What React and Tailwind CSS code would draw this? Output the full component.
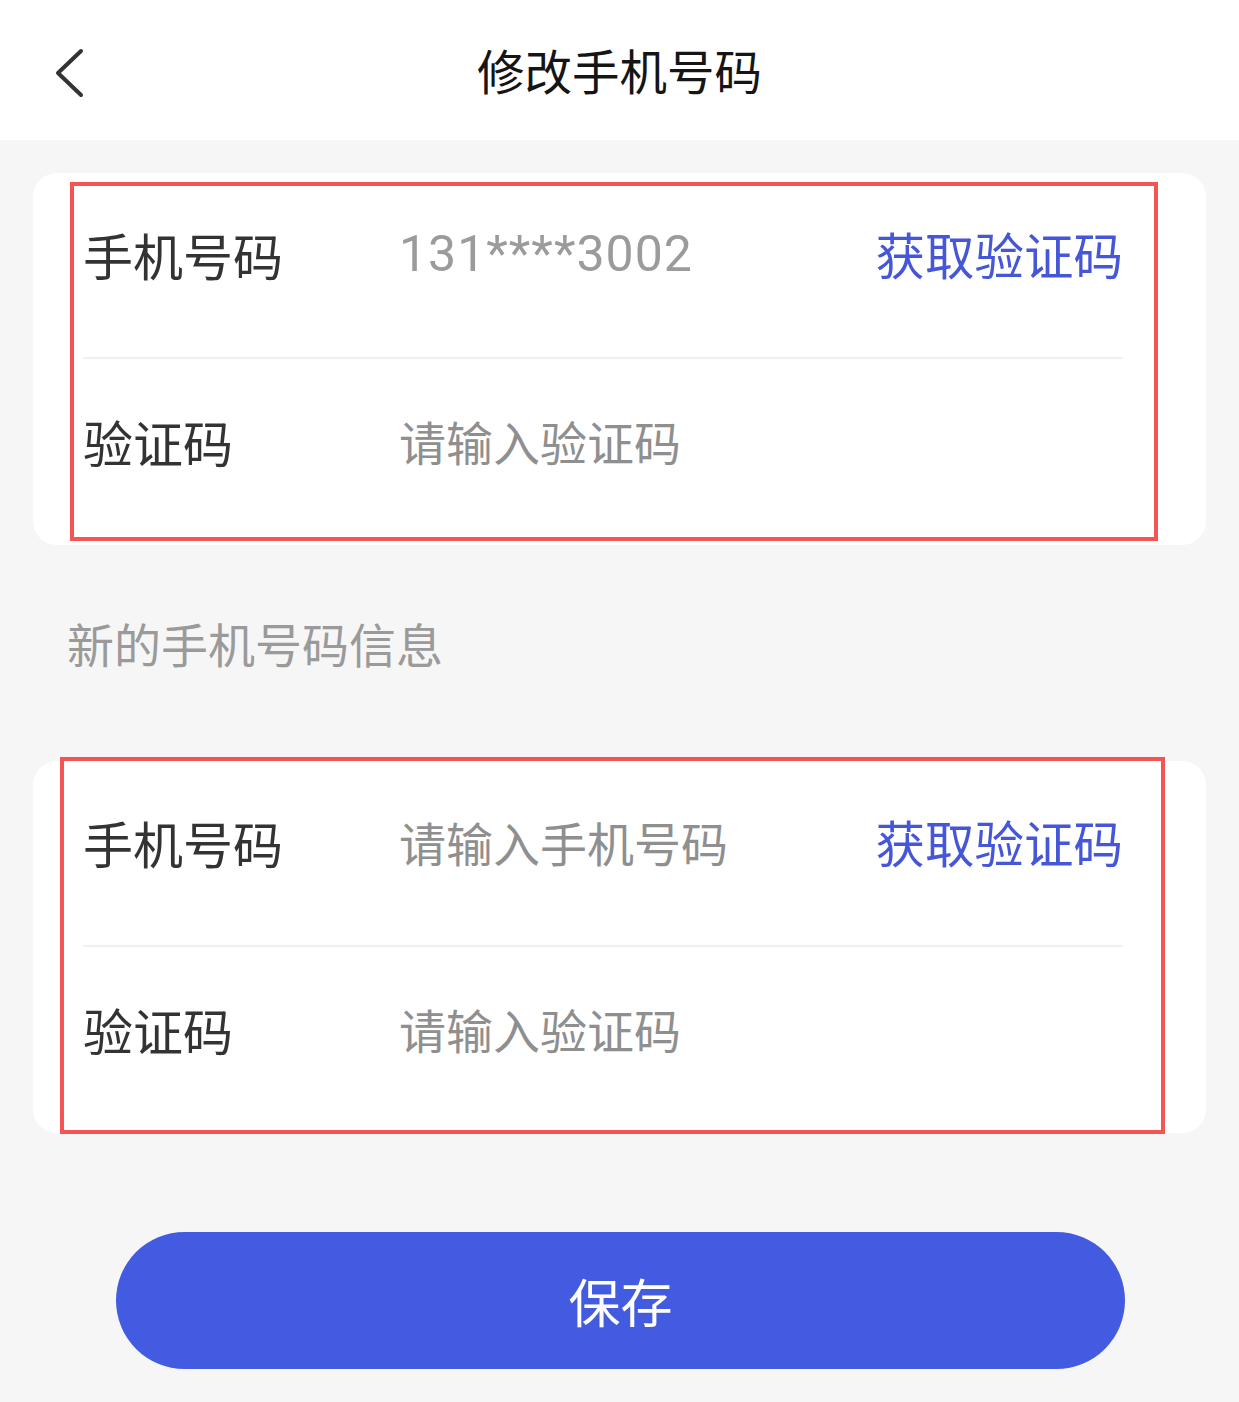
const CJK = "font-['Noto_Sans_CJK_SC','Noto_Sans',sans-serif]";

function BackIcon() {
  return (
    <svg width="32" height="50" viewBox="0 0 32 50" fill="none">
      <path
        d="M27 3 L4 25 L27 47"
        stroke="#333333"
        strokeWidth="4"
        strokeLinecap="round"
        strokeLinejoin="round"
      />
    </svg>
  );
}

function Row({ label, value, placeholder, action, divider }) {
  return (
    <div
      className={`flex h-[186px] items-center pb-[22px] ${
        divider ? "border-b-2 border-[#f0f0f0]" : ""
      }`}
    >
      <div className="w-[316px] shrink-0 text-[50px] leading-none text-[#333333]">
        {label}
      </div>
      <div className="flex-1 min-w-0">
        {value ? (
          <span className="font-['Roboto','Noto_Sans_CJK_SC',sans-serif] text-[50px] leading-none tracking-[1px] text-[#9b9b9b]">
            {value}
          </span>
        ) : (
          <span className="text-[47px] leading-none text-[#8f8f8f]">
            {placeholder}
          </span>
        )}
      </div>
      {action && (
        <div className="shrink-0 text-[49.5px] leading-none text-[#4557d8]">
          {action}
        </div>
      )}
    </div>
  );
}

function Card({ rows, box }) {
  return (
    <div className="relative rounded-[24px] bg-white pl-[50px] pr-[83px]">
      {rows.map((r, i) => (
        <Row key={i} {...r} divider={i < rows.length - 1} />
      ))}
      {/* annotation box */}
      <div
        className={`pointer-events-none absolute border-[4px] border-[#f45454] ${box}`}
      />
    </div>
  );
}

export default function App() {
  return (
    <div className={`min-h-[1402px] w-full bg-[#f6f6f6] ${CJK}`}>
      {/* Header */}
      <div className="grid h-[140px] grid-cols-[1fr_auto_1fr] items-center bg-white">
        <div className="pl-[54px] pt-[6px]">
          <BackIcon />
        </div>
        <h1 className="text-[47.5px] leading-none text-[#151515]">
          修改手机号码
        </h1>
        <div />
      </div>

      <div className="px-[33px] pt-[33px]">
        <Card
          box="left-[37px] top-[9px] w-[1088px] h-[359px]"
          rows={[
            { label: "手机号码", value: "131****3002", action: "获取验证码" },
            { label: "验证码", placeholder: "请输入验证码" },
          ]}
        />

        <div className="pl-[34px] pt-[74px] pb-[95px] text-[47px] leading-none text-[#9a9a9a]">
          新的手机号码信息
        </div>

        <Card
          box="left-[27px] top-[-4px] w-[1105px] h-[377px]"
          rows={[
            { label: "手机号码", placeholder: "请输入手机号码", action: "获取验证码" },
            { label: "验证码", placeholder: "请输入验证码" },
          ]}
        />
      </div>

      <div className="pl-[116px] pr-[114px] pt-[99px]">
        <button className="flex h-[137px] w-full items-center justify-center rounded-full bg-[#435be0] text-[52px] leading-none text-white">
          保存
        </button>
      </div>
    </div>
  );
}
